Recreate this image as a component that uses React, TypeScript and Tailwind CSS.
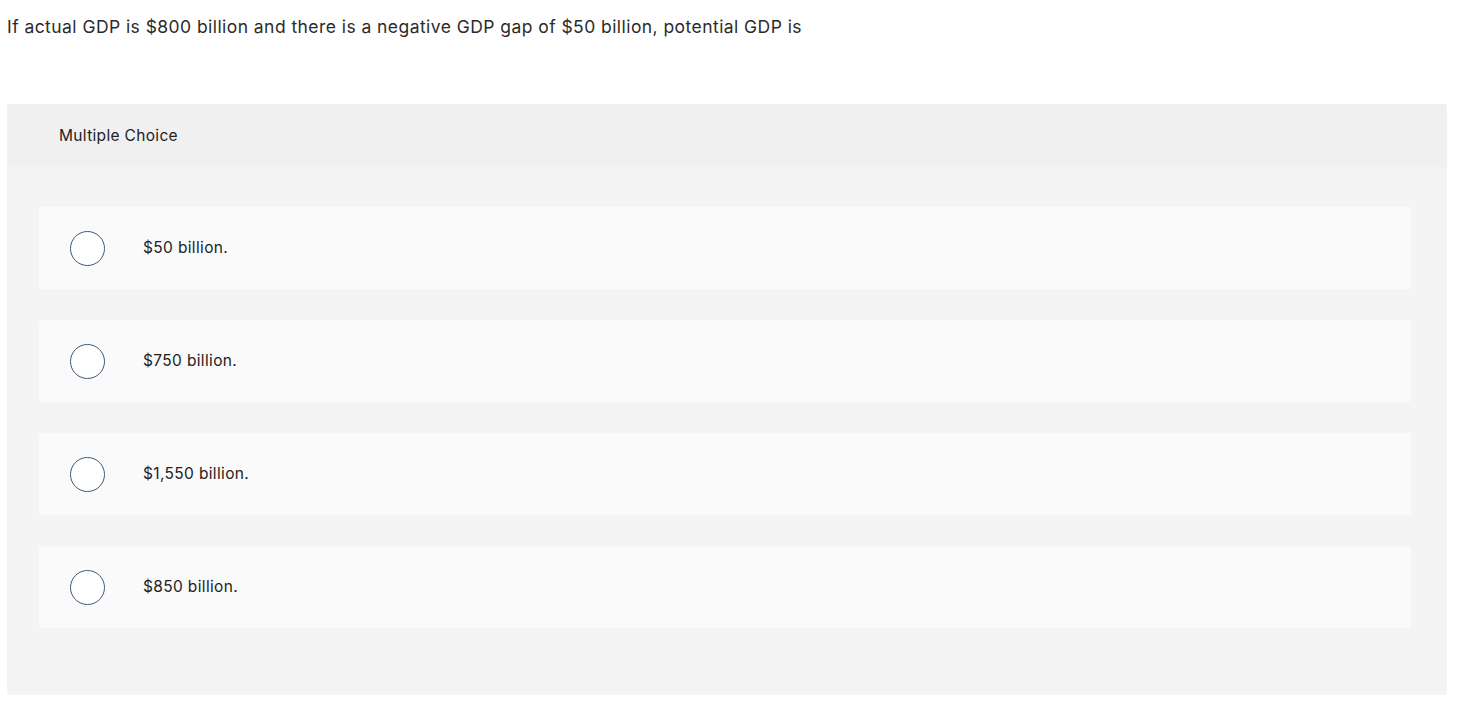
const options = ["$50 billion.", "$750 billion.", "$1,550 billion.", "$850 billion."]

function Option({ label }: { label: string }) {
	return (
		<div className="flex h-[82px] items-center rounded-[2px] bg-[#fafafa]">
			<span className="ml-[31px] h-[35px] w-[35px] shrink-0 rounded-full border border-[#3d5a7a] bg-white" />
			<span className="ml-[38px] text-[15.5px] tracking-[0.35px] text-[#222]">{label}</span>
		</div>
	)
}

export default function App() {
	return (
		<div className="min-h-screen bg-white font-['Inter','Lato',sans-serif] text-[#2b2b2b]">
			<p className="m-0 pt-[14px] pl-[7px] text-[17.5px] leading-[26px] tracking-[0.44px]">
				If actual GDP is $800 billion and there is a negative GDP gap of $50 billion, potential GDP is
			</p>
			<section className="mt-[64px] ml-[7px] w-[1440px] overflow-hidden rounded-[3px] bg-[#f4f4f4]">
				<div className="flex h-[63px] items-center bg-[#f0f0f0] pl-[52px] text-[15.5px] tracking-[0.33px] text-[#222]">
					Multiple Choice
				</div>
				<div className="flex flex-col gap-[31px] px-[32px] pt-[40px] pb-[67px] pr-[36px]">
					{options.map((o) => (
						<Option key={o} label={o} />
					))}
				</div>
			</section>
		</div>
	)
}
